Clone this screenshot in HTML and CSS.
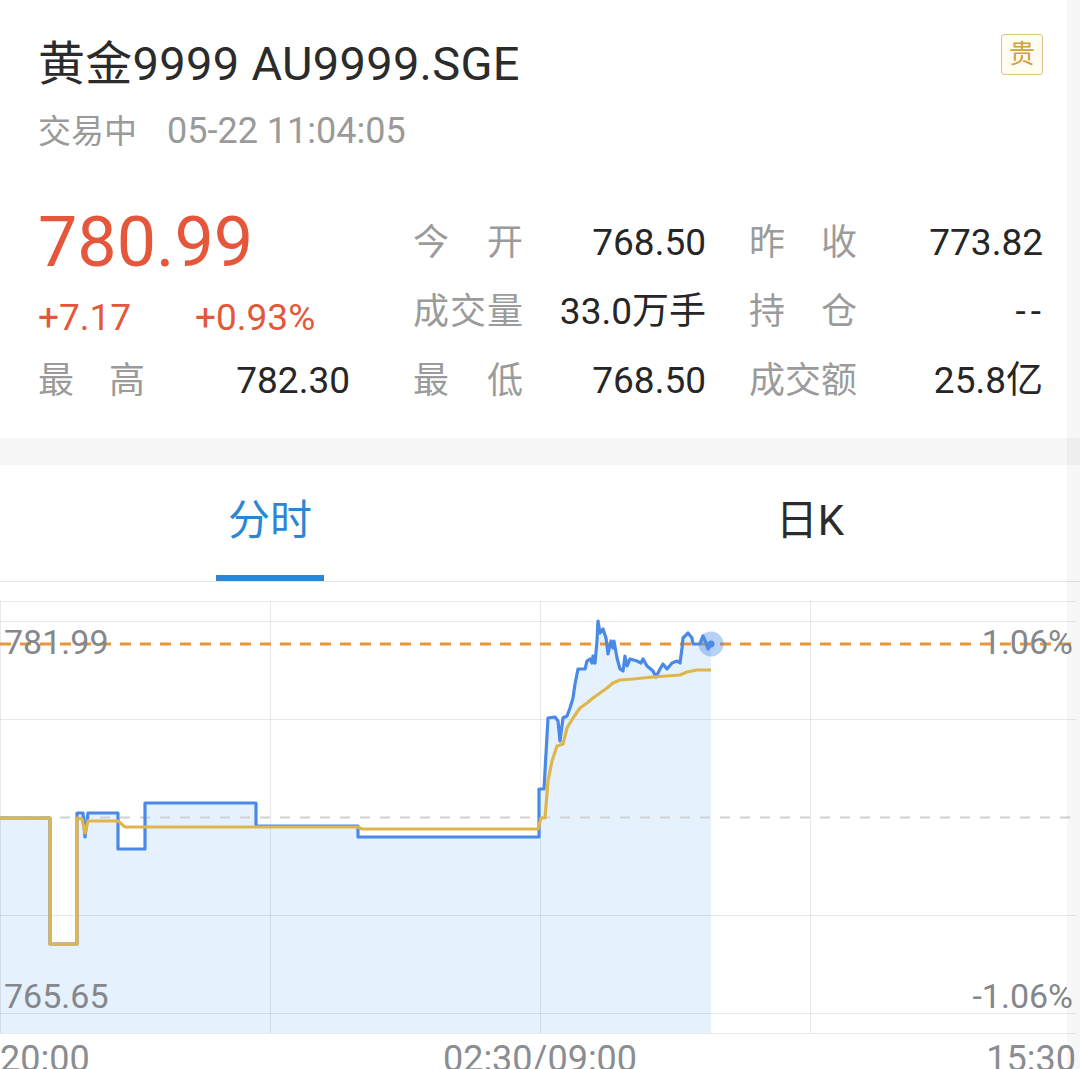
FILE: index.html
```html
<!DOCTYPE html>
<html lang="zh-CN">
<head>
<meta charset="utf-8">
<title>黄金9999 AU9999.SGE</title>
<link rel="stylesheet" href="styles.css">
</head>
<body>
<div class="page">
  <header class="head">
    <div class="title-row">
      <h1 class="title">黄金9999 AU9999.SGE</h1>
      <span class="badge">贵</span>
    </div>
    <div class="status"><span class="status-label">交易中</span><span class="status-time">05-22 11:04:05</span></div>
    <div class="quote">
      <div class="price">780.99</div>
      <div class="lbl lbl-b">今 开</div><div class="val">768.50</div>
      <div class="lbl lbl-c">昨 收</div><div class="val">773.82</div>

      <div class="chg">+7.17</div><div class="chg">+0.93%</div>
      <div class="lbl lbl-b">成交量</div><div class="val">33.0万手</div>
      <div class="lbl lbl-c">持 仓</div><div class="val dash">--</div>

      <div class="lbl lbl-a">最 高</div><div class="val">782.30</div>
      <div class="lbl lbl-b">最 低</div><div class="val">768.50</div>
      <div class="lbl lbl-c">成交额</div><div class="val">25.8亿</div>
    </div>
  </header>

  <div class="band"></div>

  <nav class="tabs">
    <div class="tab active"><span class="tab-text">分时</span><span class="tab-bar"></span></div>
    <div class="tab"><span class="tab-text">日K</span><span class="tab-bar"></span></div>
  </nav>

  <section class="chart">
    <svg class="chart-svg" width="1080" height="488" viewBox="0 581 1080 488" xmlns="http://www.w3.org/2000/svg">
      <polygon class="area" points="0,817 50,817 50,943 77,943 77,812 83,812 85,836 88,812 118,812 118,848 145,848 145,802 256,802 256,825 358,825 358,836 539,836 539,788 544,788 548,717 555,716 558,720 560,740 563,717 567,715 570,707 573,697 575,683 578,668 585,668 587,660 590,658 592,662 593,655 595,662 597,640 598,620 600,632 603,628 606,637 608,653 611,640 613,647 614,640 617,657 620,668 623,670 625,655 627,665 630,658 637,660 641,662 643,658 647,665 653,670 656,676 660,668 663,663 667,668 672,662 677,660 680,662 682,647 683,637 688,632 692,637 693,643 700,643 703,635 706,642 708,648 711,643 711,1032 0,1032"/>

      <g class="grid">
        <line x1="0" y1="600.5" x2="1076" y2="600.5"/>
        <line x1="0" y1="620.5" x2="1076" y2="620.5"/>
        <line x1="0" y1="718.5" x2="1076" y2="718.5"/>
        <line x1="0" y1="914.5" x2="1076" y2="914.5"/>
        <line x1="0" y1="1012.5" x2="1076" y2="1012.5"/>
        <line x1="0" y1="1032.5" x2="1076" y2="1032.5"/>
        <line x1="0.5" y1="600" x2="0.5" y2="1032"/>
        <line x1="270.5" y1="600" x2="270.5" y2="1032"/>
        <line x1="540.5" y1="600" x2="540.5" y2="1032"/>
        <line x1="810.5" y1="600" x2="810.5" y2="1032"/>
      </g>

      <line class="mid-line" x1="0" y1="816.5" x2="1080" y2="816.5"/>
      <line class="cur-line" x1="0" y1="643" x2="1080" y2="643"/>

      <polyline class="price-line" points="0,817 50,817 50,943 77,943 77,812 83,812 85,836 88,812 118,812 118,848 145,848 145,802 256,802 256,825 358,825 358,836 539,836 539,788 544,788 548,717 555,716 558,720 560,740 563,717 567,715 570,707 573,697 575,683 578,668 585,668 587,660 590,658 592,662 593,655 595,662 597,640 598,620 600,632 603,628 606,637 608,653 611,640 613,647 614,640 617,657 620,668 623,670 625,655 627,665 630,658 637,660 641,662 643,658 647,665 653,670 656,676 660,668 663,663 667,668 672,662 677,660 680,662 682,647 683,637 688,632 692,637 693,643 700,643 703,635 706,642 708,648 711,643"/>
      <polyline class="avg-line" points="0,817 50,817 50,943 77,943 77,817 82,818 85,832 88,820 118,820 125,826 358,826 362,828 538,828 541,817 545,817 548,780 552,760 557,745 563,743 567,727 573,717 580,707 587,702 593,697 600,692 607,687 613,682 620,679 633,678 653,676 680,674 687,671 697,669 711,669"/>

      <circle class="halo" cx="711" cy="643" r="12.5"/>
      <circle class="dot" cx="711" cy="643" r="3.5"/>

      <g class="axis">
        <text x="4" y="653">781.99</text>
        <text x="1073" y="653" text-anchor="end">1.06%</text>
        <text x="4" y="1007">765.65</text>
        <text x="1073" y="1007" text-anchor="end">-1.06%</text>
      </g>
      <g class="time">
        <text x="0" y="1070">20:00</text>
        <text x="540" y="1070" text-anchor="middle">02:30/09:00</text>
        <text x="1076" y="1070" text-anchor="end">15:30</text>
      </g>
    </svg>
  </section>
  <div class="edge"></div>
</div>
</body>
</html>
```

FILE: styles.css
```css
html, body {
  margin: 0;
  padding: 0;
  background: #ffffff;
  overflow: hidden;
}

.page {
  width: 1080px;
  height: 1069px;
  font-family: Roboto, "Noto Sans CJK SC", sans-serif;
  color: #262626;
}

.head {
  padding: 34px 37px 23px 38px;
}

.title-row {
  display: flex;
  justify-content: space-between;
  align-items: flex-start;
}

.title {
  margin: 0;
  font-size: 47px;
  line-height: 60px;
  font-weight: 400;
  letter-spacing: 0.3px;
  color: #2b2b2b;
}

.badge {
  box-sizing: border-box;
  width: 42px;
  height: 41px;
  border: 1.5px solid #dcc28c;
  border-radius: 3px;
  background: #fffcf2;
  color: #d4a03c;
  font-size: 26px;
  line-height: 38px;
  text-align: center;
}

.status {
  margin-top: 12px;
  font-size: 36px;
  line-height: 50px;
  color: #9a9a9a;
  display: flex;
  align-items: baseline;
}

.status-label {
  font-size: 33px;
  margin-right: 30px;
}

.quote {
  margin-top: 51px;
  display: grid;
  grid-template-columns: 157px 155px 173px 183px 151px 186px;
  grid-auto-rows: 69px;
  align-items: center;
}

.price {
  grid-column: span 2;
  font-size: 70px;
  line-height: 69px;
  color: #e4573b;
}

.chg {
  font-size: 37px;
  line-height: 40px;
  color: #e4573b;
  padding-top: 12px;
}

.lbl {
  font-size: 36px;
  line-height: 44px;
  color: #9b9b9b;
  white-space: nowrap;
  text-align: justify;
  text-align-last: justify;
}

.lbl-a { padding-right: 50px; }
.lbl-b { padding-left: 63px; }
.lbl-c { padding-left: 43px; }

.val {
  font-size: 37px;
  line-height: 44px;
  text-align: right;
  white-space: nowrap;
  color: #262626;
}

.val.dash {
  letter-spacing: 5px;
  margin-right: -3px;
}

.band {
  height: 27px;
  background: #f6f6f6;
}

.tabs {
  display: flex;
  height: 116px;
  border-bottom: 1px solid #e4e4e4;
}

.tab {
  flex: 1;
  display: flex;
  flex-direction: column;
  align-items: center;
  padding-top: 26px;
}

.tab-text {
  font-size: 42px;
  line-height: 60px;
  color: #2b2b2b;
}

.tab-bar {
  margin-top: 24px;
  width: 108px;
  height: 6px;
  background: transparent;
}

.tab.active .tab-text { color: #2e86d3; }
.tab.active .tab-bar { background: #2e86d3; }

.chart-svg {
  display: block;
}

.area {
  fill: #e5f1fd;
}

.grid line {
  stroke: rgba(0, 0, 0, 0.085);
  stroke-width: 1;
}

.mid-line {
  stroke: #cfd1d4;
  stroke-width: 2;
  stroke-dasharray: 10 10;
}

.cur-line {
  stroke: #e8963c;
  stroke-width: 3;
  stroke-dasharray: 11 9;
}

.price-line {
  fill: none;
  stroke: #4a89e6;
  stroke-width: 3.2;
  stroke-linejoin: round;
}

.avg-line {
  fill: none;
  stroke: #dfb64c;
  stroke-width: 3.2;
  stroke-linejoin: round;
}

.halo {
  fill: rgba(74, 137, 230, 0.4);
}

.dot {
  fill: #4a89e6;
}

.axis text {
  font-family: Roboto, sans-serif;
  font-size: 34px;
  fill: #84878b;
}

.time text {
  font-family: Roboto, sans-serif;
  font-size: 36px;
  fill: #8a8d91;
}

.edge {
  position: fixed;
  top: 0;
  right: 0;
  width: 13px;
  height: 100%;
  background: rgba(0, 0, 0, 0.03);
  pointer-events: none;
}
```
